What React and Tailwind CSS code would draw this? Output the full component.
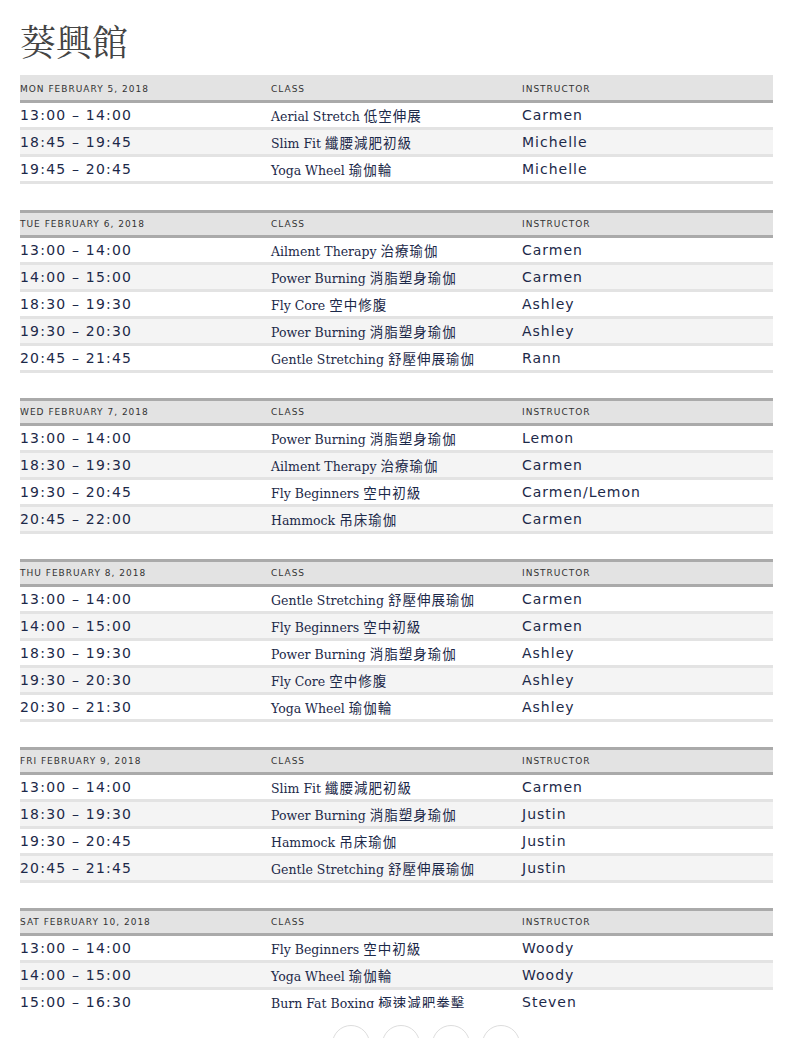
const schedule = [
  {
    date: 'Mon February 5, 2018',
    rows: [
      ['13:00 – 14:00', 'Aerial Stretch', '低空伸展', 'Carmen'],
      ['18:45 – 19:45', 'Slim Fit', '纖腰減肥初級', 'Michelle'],
      ['19:45 – 20:45', 'Yoga Wheel', '瑜伽輪', 'Michelle'],
    ],
  },
  {
    date: 'Tue February 6, 2018',
    rows: [
      ['13:00 – 14:00', 'Ailment Therapy', '治療瑜伽', 'Carmen'],
      ['14:00 – 15:00', 'Power Burning', '消脂塑身瑜伽', 'Carmen'],
      ['18:30 – 19:30', 'Fly Core', '空中修腹', 'Ashley'],
      ['19:30 – 20:30', 'Power Burning', '消脂塑身瑜伽', 'Ashley'],
      ['20:45 – 21:45', 'Gentle Stretching', '舒壓伸展瑜伽', 'Rann'],
    ],
  },
  {
    date: 'Wed February 7, 2018',
    rows: [
      ['13:00 – 14:00', 'Power Burning', '消脂塑身瑜伽', 'Lemon'],
      ['18:30 – 19:30', 'Ailment Therapy', '治療瑜伽', 'Carmen'],
      ['19:30 – 20:45', 'Fly Beginners', '空中初級', 'Carmen/Lemon'],
      ['20:45 – 22:00', 'Hammock', '吊床瑜伽', 'Carmen'],
    ],
  },
  {
    date: 'Thu February 8, 2018',
    rows: [
      ['13:00 – 14:00', 'Gentle Stretching', '舒壓伸展瑜伽', 'Carmen'],
      ['14:00 – 15:00', 'Fly Beginners', '空中初級', 'Carmen'],
      ['18:30 – 19:30', 'Power Burning', '消脂塑身瑜伽', 'Ashley'],
      ['19:30 – 20:30', 'Fly Core', '空中修腹', 'Ashley'],
      ['20:30 – 21:30', 'Yoga Wheel', '瑜伽輪', 'Ashley'],
    ],
  },
  {
    date: 'Fri February 9, 2018',
    rows: [
      ['13:00 – 14:00', 'Slim Fit', '纖腰減肥初級', 'Carmen'],
      ['18:30 – 19:30', 'Power Burning', '消脂塑身瑜伽', 'Justin'],
      ['19:30 – 20:45', 'Hammock', '吊床瑜伽', 'Justin'],
      ['20:45 – 21:45', 'Gentle Stretching', '舒壓伸展瑜伽', 'Justin'],
    ],
  },
  {
    date: 'Sat February 10, 2018',
    rows: [
      ['13:00 – 14:00', 'Fly Beginners', '空中初級', 'Woody'],
      ['14:00 – 15:00', 'Yoga Wheel', '瑜伽輪', 'Woody'],
      ['15:00 – 16:30', 'Burn Fat Boxing', '極速減肥拳擊', 'Steven'],
    ],
  },
];

const sans = "font-['DejaVu_Sans','Verdana',sans-serif]";

const DayTable = ({ day, first }) => (
  <div className={`w-[753px] ${first ? 'mb-[1px]' : ''}`}>
    <div
      className={`grid grid-cols-3 items-center h-[28px] pt-[2px] bg-[#e3e3e3] border-t-[3px] border-b-[3px] border-b-[#aaaaaa] ${
        first ? 'border-t-[#e3e3e3]' : 'border-t-[#aaaaaa]'
      } ${sans} text-[9px] tracking-[1px] uppercase text-[#333]`}
    >
      <div>{day.date}</div>
      <div>Class</div>
      <div>Instructor</div>
    </div>
    {day.rows.map((row, i) => (
      <div
        key={i}
        className={`grid grid-cols-3 items-center h-[27px] border-b-[3px] border-[#e3e3e3] text-[#1c2949] ${
          i % 2 === 1 ? 'bg-[#f4f4f4]' : 'bg-white'
        }`}
      >
        <div className={`${sans} text-[14px] tracking-[1.2px]`}>{row[0]}</div>
        <div className="whitespace-nowrap">
          <span className="font-['DejaVu_Serif',serif] text-[12.5px]">{row[1]} </span>
          <span className="font-['Noto_Sans_CJK_TC',sans-serif] text-[13.5px] tracking-[1px]">{row[2]}</span>
        </div>
        <div className={`${sans} text-[14px] tracking-[1px]`}>{row[3]}</div>
      </div>
    ))}
  </div>
);

export default function App() {
  return (
    <div className="bg-white min-h-screen px-[20px] pb-[40px]">
      <h1 className="pt-[23px] pb-[16px] text-[36px] leading-[36px] font-normal text-[#444] font-['Noto_Serif_CJK_TC','Noto_Sans_CJK_TC',serif]">
        葵興館
      </h1>
      <div className="flex flex-col gap-[25px]">
        {schedule.map((day, i) => (
          <DayTable key={day.date} day={day} first={i === 0} />
        ))}
      </div>

      {/* share bar pinned to the bottom */}
      <div className="fixed bottom-0 left-0 right-0 h-[30px] bg-white overflow-hidden">
        <div className="flex gap-[12px] ml-[332px] mt-[17px]">
          {[0, 1, 2, 3].map((n) => (
            <div key={n} className="w-[38px] h-[38px] rounded-full border border-[#dddddd] bg-white" />
          ))}
        </div>
      </div>
    </div>
  );
}
